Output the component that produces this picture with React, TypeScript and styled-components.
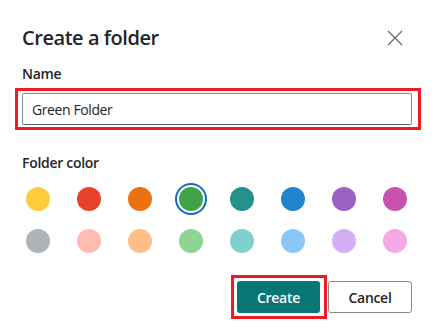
import styled, { createGlobalStyle } from "styled-components";

const GlobalStyle = createGlobalStyle`
  html, body {
    margin: 0;
    padding: 0;
    background: #ffffff;
  }
  body {
    font-family: "Open Sans", "Noto Sans", sans-serif;
    color: #242424;
  }
`;

const swatches = [
  "#ffcd3c",
  "#e8412c",
  "#ed7013",
  "#41a04a",
  "#24918b",
  "#1f85cf",
  "#9a62c4",
  "#c952b1",
  "#aeb4b7",
  "#ffbcb2",
  "#ffbf86",
  "#8ed493",
  "#7dd2cf",
  "#88c7f7",
  "#d5aff5",
  "#f5aae6",
];

const selectedIndex = 3;

export default function App() {
  return (
    <>
      <GlobalStyle />
      <Dialog>
        <Header>
          <Title>Create a folder</Title>
          <CloseButton aria-label="Close">
            <svg width="16" height="16" viewBox="0 0 16 16">
              <path
                d="M1 1 L15 15 M15 1 L1 15"
                stroke="#616161"
                strokeWidth="1.1"
                fill="none"
              />
            </svg>
          </CloseButton>
        </Header>

        <Label $top={10}>Name</Label>
        <InputHighlight>
          <Input defaultValue="Green Folder" />
        </InputHighlight>

        <Label $top={23}>Folder color</Label>
        <Swatches>
          {swatches.map((c, i) => (
            <Swatch key={c} $color={c} $selected={i === selectedIndex} />
          ))}
        </Swatches>

        <Footer>
          <ButtonHighlight>
            <PrimaryButton>Create</PrimaryButton>
          </ButtonHighlight>
          <SecondaryButton>Cancel</SecondaryButton>
        </Footer>
      </Dialog>
    </>
  );
}

const Dialog = styled.div`
  width: 434px;
  height: 335px;
  box-sizing: border-box;
  padding: 22px 22px 0 22px;
  display: flex;
  flex-direction: column;
`;

const Header = styled.div`
  display: flex;
  align-items: center;
  justify-content: space-between;
  height: 32px;
`;

const Title = styled.h2`
  margin: 0;
  font-size: 20px;
  font-weight: 600;
  line-height: 28px;
  letter-spacing: -0.45px;
`;

const CloseButton = styled.button`
  display: flex;
  align-items: center;
  justify-content: center;
  width: 24px;
  height: 24px;
  margin-right: 5px;
  padding: 0;
  border: none;
  background: transparent;
  cursor: pointer;
`;

const Label = styled.div<{ $top: number }>`
  margin-top: ${(p) => p.$top}px;
  font-size: 14px;
  font-weight: 600;
  line-height: 20px;
  letter-spacing: -0.3px;
`;

/* red annotation frames around the input and the Create button */
const InputHighlight = styled.div`
  margin: 4px -9px 0 -7px;
  padding: 2px 6px 2px 4px;
  border: 3px solid #ec1c24;
`;

const ButtonHighlight = styled.div`
  margin: -6px -7px -6px -6px;
  padding: 3px 4px 3px 3px;
  border: 3px solid #ec1c24;
  display: flex;
`;

const Input = styled.input`
  display: block;
  width: 100%;
  box-sizing: border-box;
  height: 32px;
  padding: 0 9px;
  border: 1px solid #8a8a8a;
  border-bottom-color: #616161;
  border-radius: 2px;
  font-family: inherit;
  font-size: 14px;
  letter-spacing: -0.4px;
  color: #242424;
  outline: none;
`;

const Swatches = styled.div`
  display: grid;
  grid-template-columns: repeat(8, 32px);
  column-gap: 19px;
  row-gap: 10px;
  margin-top: 10px;
`;

const Swatch = styled.div<{ $color: string; $selected: boolean }>`
  width: 32px;
  height: 32px;
  display: flex;
  align-items: center;
  justify-content: center;

  &::after {
    content: "";
    width: 24px;
    height: 24px;
    border-radius: 50%;
    background: ${(p) => p.$color};
    box-shadow: ${(p) =>
      p.$selected ? "0 0 0 2px #ffffff, 0 0 0 4px #0f6cbd" : "none"};
  }
`;

const Footer = styled.div`
  display: flex;
  align-items: flex-start;
  justify-content: flex-end;
  gap: 8px;
  margin-top: 24px;
`;

const BaseButton = styled.button`
  height: 32px;
  box-sizing: border-box;
  border-radius: 3px;
  font-family: inherit;
  font-size: 14px;
  font-weight: 600;
  letter-spacing: -0.3px;
  cursor: pointer;
`;

const PrimaryButton = styled(BaseButton)`
  width: 83px;
  background: #077675;
  color: #ffffff;
  border: none;
`;

const SecondaryButton = styled(BaseButton)`
  width: 84px;
  background: #ffffff;
  color: #242424;
  border: 1px solid #8a8a8a;
`;
